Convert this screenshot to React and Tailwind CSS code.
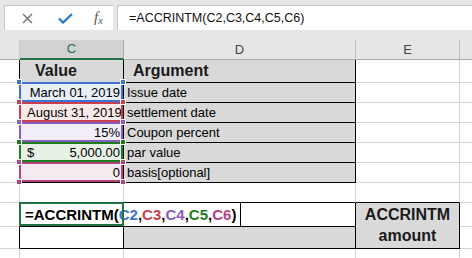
import React from 'react'

// gridline colour for untouched cells
const grid = 'border-[#d4d4d4]'

const Handle = ({ pos, color }) => (
  <span className={`absolute w-[6px] h-[6px] border border-white ${color} ${pos}`} />
)

// coloured range box drawn over a referenced cell
const RefBox = ({ border, fill }) => (
  <>
    <span className={`absolute -top-[1px] -left-[1px] right-0 bottom-0 border-2 ${border}`} />
    <Handle pos="-top-[4px] -left-[4px]" color={fill} />
    <Handle pos="-top-[4px] -right-[3px]" color={fill} />
    <Handle pos="-bottom-[3px] -left-[4px]" color={fill} />
    <Handle pos="-bottom-[3px] -right-[3px]" color={fill} />
  </>
)

const rows = [
  { value: 'March 01, 2019', arg: 'Issue date', bg: 'bg-[#e7eef9]', border: 'border-[#3f72cf]', fill: 'bg-[#3f72cf]' },
  { value: 'August 31, 2019', arg: 'settlement date', bg: 'bg-[#fbeaea]', border: 'border-[#c9404c]', fill: 'bg-[#c9404c]' },
  { value: '15%', arg: 'Coupon percent', bg: 'bg-[#f1edf9]', border: 'border-[#8a5cc2]', fill: 'bg-[#8a5cc2]' },
  { value: '5,000.00', dollar: true, arg: 'par value', bg: 'bg-[#e6f2e6]', border: 'border-[#1d7d1d]', fill: 'bg-[#1d7d1d]' },
  { value: '0', arg: 'basis[optional]', bg: 'bg-[#f6eaf1]', border: 'border-[#b2437f]', fill: 'bg-[#b2437f]' },
]

export default function App() {
  return (
    <div className="w-[472px] h-[258px] overflow-hidden bg-white text-black font-['Liberation_Sans',Arial,sans-serif]">
      {/* Formula bar */}
      <div className="h-[40px] bg-[#e6e6e6] pt-[5px] flex">
        <div className="ml-[4px] w-[109px] h-[25px] bg-white border-t border-l border-[#c8c8c8] flex items-center">
          <svg className="ml-[17px]" width="11" height="11" viewBox="0 0 11 11">
            <path d="M1 1 L10 10 M10 1 L1 10" stroke="#6e6e6e" strokeWidth="1.4" fill="none" />
          </svg>
          <svg className="ml-[25px]" width="15" height="11" viewBox="0 0 15 11">
            <path d="M1 5.5 L5 9.5 L14 1" stroke="#2e7bcb" strokeWidth="2.4" fill="none" />
          </svg>
          <span className="ml-[21px] italic text-[#555] font-['Liberation_Serif',serif] text-[15px] leading-none">
            f<span className="text-[10px] align-[-2px]">x</span>
          </span>
        </div>
        <div className="ml-[4px] flex-1 h-[25px] bg-white border-t border-l border-[#c8c8c8] flex items-center pl-[11px] text-[12.5px] text-[#111]">
          =ACCRINTM(C2,C3,C4,C5,C6)
        </div>
      </div>

      <div className="grid grid-cols-[20px_104px_232px_104px_12px] grid-rows-[20px_23px_20px_20px_20px_20px_20px_20px_24px_22px_9px] text-[13px] leading-[16px]">
        {/* Column headers */}
        <div className="bg-[#e6e6e6] border-r border-b border-r-[#c8c8c8] border-b-[#ababab]" />
        <div className="bg-[#d2d2d2] border-r border-r-[#ababab] border-b-2 border-b-[#217346] text-[#217346] flex items-center justify-center text-[13px]">C</div>
        <div className="bg-[#e6e6e6] border-r border-b border-r-[#bdbdbd] border-b-[#ababab] text-[#444] flex items-center justify-center">D</div>
        <div className="bg-[#e6e6e6] border-r border-b border-r-[#bdbdbd] border-b-[#ababab] text-[#444] flex items-center justify-center">E</div>
        <div className="bg-[#e6e6e6] border-b border-b-[#ababab]" />

        {/* Row 1 */}
        <div className="border-r border-b border-r-black border-b-[#d4d4d4]" />
        <div className="bg-[#d9d9d9] border-r border-b border-black flex items-end pl-[15px] pb-[2px] font-bold text-[16px] leading-[18px] text-[#1a1a1a]">Value</div>
        <div className="bg-[#d9d9d9] border-r border-b border-black flex items-end pl-[9px] pb-[2px] font-bold text-[16px] leading-[18px] text-[#1a1a1a]">Argument</div>
        <div className={`border-r border-b ${grid}`} />
        <div className={`border-b ${grid}`} />

        {/* Rows 2-6 */}
        {rows.map((r) => (
          <React.Fragment key={r.arg}>
            <div className="border-r border-b border-r-black border-b-[#d4d4d4]" />
            <div className={`relative ${r.bg} border-r border-b border-black flex items-end justify-between whitespace-nowrap pr-[3px] pl-[7px] pb-[1px]`}>
              <span>{r.dollar ? '$' : ''}</span>
              <span>{r.value}</span>
              <RefBox border={r.border} fill={r.fill} />
            </div>
            <div className="bg-[#d9d9d9] border-r border-b border-black flex items-end whitespace-nowrap pl-[3px] pb-[1px]">{r.arg}</div>
            <div className={`border-r border-b ${grid}`} />
            <div className={`border-b ${grid}`} />
          </React.Fragment>
        ))}

        {/* Row 7 */}
        <div className={`border-r border-b ${grid}`} />
        <div className="border-r border-b border-r-[#d4d4d4] border-b-black" />
        <div className="border-r border-b border-r-[#d4d4d4] border-b-black" />
        <div className="border-r border-b border-r-[#d4d4d4] border-b-black" />
        <div className={`border-b ${grid}`} />

        {/* Row 8 - cell being edited */}
        <div className="border-r border-b border-r-black border-b-[#d4d4d4]" />
        <div className="relative border-b border-black">
          <div className="relative z-10 h-full flex items-end pl-[5px] pb-[2px] whitespace-nowrap font-bold text-[15px] leading-[18px]">
            =ACCRINTM(
            <span className="text-[#3f72cf]">C2</span>,
            <span className="text-[#c9404c]">C3</span>,
            <span className="text-[#8a5cc2]">C4</span>,
            <span className="text-[#1d7d1d]">C5</span>,
            <span className="text-[#b2437f]">C6</span>)
          </div>
          <span className="absolute -top-[1px] -left-[1px] right-0 bottom-0 border-2 border-[#217346] z-20" />
        </div>
        <div className="border-r border-b border-black flex">
          <div className="w-[117px] h-full border-r border-black" />
        </div>
        <div className="row-span-2 bg-[#d9d9d9] border-r border-b border-black flex flex-col items-center justify-center font-bold text-[16px] leading-[21px] text-[#1a1a1a] pb-[1px]">
          <span>ACCRINTM</span>
          <span>amount</span>
        </div>
        <div className={`border-b ${grid}`} />

        {/* Row 9 */}
        <div className="border-r border-b border-r-black border-b-[#d4d4d4]" />
        <div className="border-r border-b border-black" />
        <div className="bg-[#d9d9d9] border-r border-b border-black" />
        <div className={`border-b ${grid}`} />

        {/* Row 10 (partial) */}
        <div className={`border-r ${grid}`} />
        <div className={`border-r ${grid}`} />
        <div className={`border-r ${grid}`} />
        <div className={`border-r ${grid}`} />
        <div />
      </div>
    </div>
  )
}
